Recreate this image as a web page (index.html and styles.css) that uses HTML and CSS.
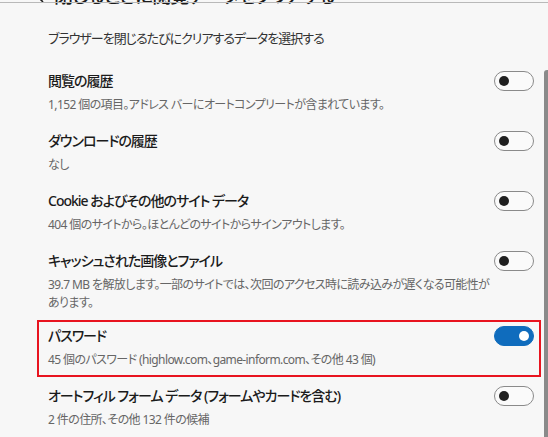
FILE: index.html
```html
<!DOCTYPE html>
<html lang="ja">
<head>
    <meta charset="UTF-8">
    <meta name="viewport" content="width=device-width, initial-scale=1.0">
    <title>閉じるときに閲覧データをクリアする</title>
    <link rel="stylesheet" href="styles.css">
</head>
<body>
    <div class="top-line"></div>
    <div class="scrollbar"></div>

    <main class="page">
        <header class="page-head">
            <span class="back">
                <svg width="14" height="14" viewBox="0 0 14 14"><path d="M7 1 1 7l6 6M1 7h12" fill="none" stroke="#1b1b1b" stroke-width="1.6"/></svg>
            </span>
            <h1>閉じるときに閲覧データをクリアする</h1>
        </header>
        <p class="lead">ブラウザーを閉じるたびにクリアするデータを選択する</p>

        <ul class="items">
            <li class="item">
                <div class="item-head">
                    <span class="item-title">閲覧の履歴</span>
                    <label class="switch"><input type="checkbox"><span class="slider"></span></label>
                </div>
                <div class="item-desc">1,152 個の項目。アドレス バーにオートコンプリートが含まれています。</div>
            </li>
            <li class="item">
                <div class="item-head">
                    <span class="item-title">ダウンロードの履歴</span>
                    <label class="switch"><input type="checkbox"><span class="slider"></span></label>
                </div>
                <div class="item-desc">なし</div>
            </li>
            <li class="item">
                <div class="item-head">
                    <span class="item-title">Cookie およびその他のサイト データ</span>
                    <label class="switch"><input type="checkbox"><span class="slider"></span></label>
                </div>
                <div class="item-desc">404 個のサイトから。ほとんどのサイトからサインアウトします。</div>
            </li>
            <li class="item">
                <div class="item-head">
                    <span class="item-title">キャッシュされた画像とファイル</span>
                    <label class="switch"><input type="checkbox"><span class="slider"></span></label>
                </div>
                <div class="item-desc">39.7 MB を解放します。一部のサイトでは、次回のアクセス時に読み込みが遅くなる可能性があります。</div>
            </li>
            <li class="item item-marked">
                <div class="item-head">
                    <span class="item-title">パスワード</span>
                    <label class="switch"><input type="checkbox" checked><span class="slider"></span></label>
                </div>
                <div class="item-desc">45 個のパスワード (highlow.com、game-inform.com、その他 43 個)</div>
            </li>
            <li class="item">
                <div class="item-head">
                    <span class="item-title">オートフィル フォーム データ (フォームやカードを含む)</span>
                    <label class="switch"><input type="checkbox"><span class="slider"></span></label>
                </div>
                <div class="item-desc">2 件の住所、その他 132 件の候補</div>
            </li>
        </ul>
    </main>
</body>
</html>
```

FILE: styles.css
```css
body {
    margin: 0;
    height: 437px;
    overflow: hidden;
    background-color: #f7f7f7;
    font-family: "Noto Sans", "Noto Sans CJK JP", sans-serif;
    font-feature-settings: "palt";
    color: #1b1b1b;
}
.top-line {
    position: absolute;
    top: 2px;
    left: 0;
    right: 0;
    height: 1px;
    background-color: #b9b9b9;
    z-index: 2;
}
.scrollbar {
    position: absolute;
    top: 70px;
    right: 0;
    width: 4px;
    bottom: 0;
    background-color: #8a8a8a;
    border-radius: 3px 0 0 0;
}
.page {
    padding: 0 14px 0 48px;
}
.page-head {
    display: flex;
    align-items: center;
    gap: 4px;
    margin: -18px 0 0 -12px;
    height: 28px;
}
.back {
    display: flex;
    width: 14px;
}
.page-head h1 {
    margin: 0;
    font-size: 19px;
    font-weight: 500;
    letter-spacing: -1px;
    line-height: 28px;
}
.lead {
    margin: 18px 0 0;
    font-size: 13px;
    letter-spacing: -1px;
    line-height: 20px;
    color: #333;
}
.items {
    list-style: none;
    margin: 14px 0 0;
    padding: 0;
}
.item {
    padding: 9px 0 8px;
}
.item-head {
    display: flex;
    align-items: center;
    justify-content: space-between;
    height: 20px;
}
.item-title {
    font-size: 14px;
    font-weight: 500;
    letter-spacing: -1px;
    line-height: 20px;
}
.item-desc {
    margin-top: 5px;
    max-width: 446px;
    font-size: 12px;
    letter-spacing: -0.6px;
    line-height: 18px;
    color: #666;
}
.item-marked {
    margin: 0 -7px 0 -11px;
    padding: 4px 5px 6px 9px;
    border: 2px solid #e8141f;
}
.switch {
    position: relative;
    display: inline-block;
    width: 40px;
    height: 20px;
}
.switch input {
    opacity: 0;
    width: 0;
    height: 0;
    margin: 0;
}
.slider {
    position: absolute;
    top: 0;
    left: 0;
    right: 0;
    bottom: 0;
    box-sizing: border-box;
    border: 1px solid #8a8a8a;
    border-radius: 10px;
    background-color: #fafafa;
}
.slider:before {
    position: absolute;
    content: "";
    width: 10px;
    height: 10px;
    left: 4px;
    top: 4px;
    border-radius: 50%;
    background-color: #1f1f1f;
}
input:checked + .slider {
    border-color: #0f6cbd;
    background-color: #0f6cbd;
}
input:checked + .slider:before {
    left: auto;
    right: 4px;
    background-color: white;
}
```
